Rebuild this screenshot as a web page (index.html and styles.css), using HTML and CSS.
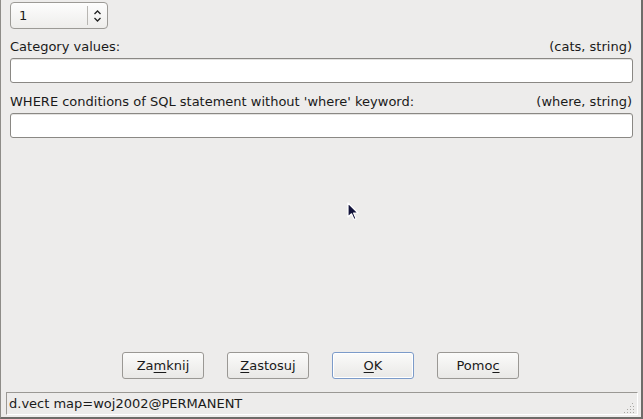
FILE: index.html
```html
<!DOCTYPE html>
<html>
<head>
<meta charset="utf-8">
<link rel="stylesheet" href="styles.css">
</head>
<body>
<div class="window">
  <div class="form">
    <div class="spin">
      <span class="spin-value">1</span>
      <span class="spin-sep"></span>
      <svg class="spin-arrows" width="9" height="14" viewBox="0 0 9 14"><path d="M1.5 5 L4.5 2 L7.5 5 M1.5 9 L4.5 12 L7.5 9" fill="none" stroke="#222" stroke-width="1.3"/></svg>
    </div>
    <div class="label-row first">
      <span>Category values:</span>
      <span>(cats, string)</span>
    </div>
    <div class="entry"></div>
    <div class="label-row">
      <span>WHERE conditions of SQL statement without 'where' keyword:</span>
      <span>(where, string)</span>
    </div>
    <div class="entry"></div>
  </div>
  <div class="spacer"></div>
  <div class="buttons">
    <div class="btn">Za<u>m</u>knij</div>
    <div class="btn"><u>Z</u>astosuj</div>
    <div class="btn default"><u>O</u>K</div>
    <div class="btn">Pomo<u>c</u></div>
  </div>
  <div class="status">
    <span>d.vect map=woj2002@PERMANENT</span>
    <svg class="grip" width="10" height="10" viewBox="0 0 10 10">
      <g fill="#a8a6a2">
        <rect x="8" y="0" width="1" height="1"/>
        <rect x="6" y="3" width="1" height="1"/><rect x="9" y="3" width="1" height="1"/>
        <rect x="3" y="6" width="1" height="1"/><rect x="6" y="6" width="1" height="1"/><rect x="9" y="6" width="1" height="1"/>
        <rect x="0" y="9" width="1" height="1"/><rect x="3" y="9" width="1" height="1"/><rect x="6" y="9" width="1" height="1"/><rect x="9" y="9" width="1" height="1"/>
      </g>
    </svg>
  </div>
  <svg class="cursor" width="13" height="20" viewBox="0 0 13 20">
    <path d="M1 1 L1 15 L4.5 11.8 L7 17.5 L9 16.6 L6.6 11 L11 11 Z" fill="#12133a" stroke="#fff" stroke-width="1.2" stroke-linejoin="round"/>
  </svg>
</div>
</body>
</html>
```

FILE: styles.css
```css
html, body {
  margin: 0;
  padding: 0;
}
body {
  width: 643px;
  height: 419px;
  overflow: hidden;
  background: #edeceb;
  font-family: "DejaVu Sans", sans-serif;
  font-size: 13px;
  color: #1a1a1a;
}
.window {
  position: relative;
  box-sizing: border-box;
  width: 643px;
  height: 419px;
  border-left: 1px solid #8e8c88;
  border-right: 2px solid #6e6c69;
  border-bottom: 2px solid #6e6c69;
  display: flex;
  flex-direction: column;
}
.form {
  padding: 2px 8px 0 9px;
  display: flex;
  flex-direction: column;
}
.spin {
  box-sizing: border-box;
  width: 98px;
  height: 27px;
  border: 1px solid #9c9a96;
  border-radius: 4px;
  background: linear-gradient(#fdfdfd, #eeedeb);
  display: flex;
  align-items: center;
}
.spin-value {
  margin-left: 8px;
  width: 68px;
}
.spin-sep {
  width: 1px;
  height: 19px;
  background: #b8b6b2;
}
.spin-arrows {
  margin-left: 5px;
}
.label-row {
  display: flex;
  justify-content: space-between;
  line-height: 16px;
  margin-top: 11px;
  margin-bottom: 3px;
  padding-right: 1px;
}
.label-row.first {
  margin-top: 10px;
}
.entry {
  box-sizing: border-box;
  height: 25px;
  border: 1px solid #8a8884;
  border-radius: 3px;
  background: #fff;
  box-shadow: inset 0 1px 0 #e4e3e1;
}
.spacer {
  flex: 1;
}
.buttons {
  display: flex;
  justify-content: center;
  gap: 23px;
  margin-bottom: 13px;
  padding-right: 1px;
}
.btn {
  box-sizing: border-box;
  width: 82px;
  height: 27px;
  border: 1px solid #9a9894;
  border-radius: 3px;
  background: linear-gradient(#fbfbfa, #e9e8e6);
  display: flex;
  align-items: center;
  justify-content: center;
  padding-bottom: 1px;
}
.btn u {
  text-underline-offset: 2px;
}
.btn.default {
  border-color: #7c9bc9;
  box-shadow: inset 0 0 0 1px #fff;
}
.status {
  box-sizing: border-box;
  margin: 0 3px 2px 5px;
  height: 23px;
  border-top: 1px solid #9a9894;
  border-left: 1px solid #9a9894;
  border-right: 1px solid #fff;
  border-bottom: 1px solid #fff;
  padding-left: 2px;
  display: flex;
  align-items: center;
  justify-content: space-between;
  line-height: 16px;
}
.grip {
  align-self: flex-end;
  margin: 0 3px 1px 0;
}
.cursor {
  position: absolute;
  left: 346px;
  top: 202px;
}
```
